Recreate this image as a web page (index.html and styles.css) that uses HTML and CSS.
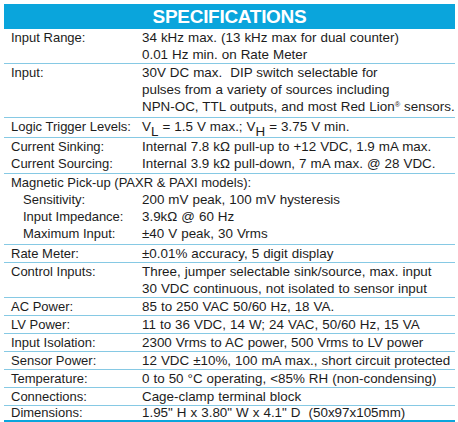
FILE: index.html
```html
<!DOCTYPE html>
<html lang="en">
<head>
    <meta charset="UTF-8">
    <meta name="viewport" content="width=device-width, initial-scale=1.0">
    <title>Specifications</title>
    <link rel="stylesheet" href="styles.css">
</head>
<body>

    <div class="spec-sheet">
        <h1 class="spec-title">SPECIFICATIONS</h1>

        <table class="spec-table">
            <tr>
                <th>Input Range:</th>
                <td>34 kHz max. (13 kHz max for dual counter)<br>0.01 Hz min. on Rate Meter</td>
            </tr>
            <tr class="pad-2">
                <th>Input:</th>
                <td>30V DC max.&nbsp; DIP switch selectable for<br>pulses from a variety of sources including<br>NPN-OC, TTL outputs, and most Red Lion<sup>®</sup> sensors.</td>
            </tr>
            <tr class="pad-2">
                <th>Logic Trigger Levels:</th>
                <td>V<sub>L</sub> = 1.5 V max.; V<sub>H</sub> = 3.75 V min.</td>
            </tr>
            <tr class="pad-1">
                <th>Current Sinking:<br>Current Sourcing:</th>
                <td>Internal 7.8 kΩ pull-up to +12 VDC, 1.9 mA max.<br>Internal 3.9 kΩ pull-down, 7 mA max. @ 28 VDC.</td>
            </tr>
            <tr class="pad-2">
                <td colspan="2" class="group">
                    <div class="group-head">Magnetic Pick-up (PAXR &amp; PAXI models):</div>
                    <div class="sub-row"><span class="sub-label">Sensitivity:</span><span>200 mV peak, 100 mV hysteresis</span></div>
                    <div class="sub-row"><span class="sub-label">Input Impedance:</span><span>3.9kΩ @ 60 Hz</span></div>
                    <div class="sub-row"><span class="sub-label">Maximum Input:</span><span>±40 V peak, 30 Vrms</span></div>
                </td>
            </tr>
            <tr>
                <th>Rate Meter:</th>
                <td>±0.01% accuracy, 5 digit display</td>
            </tr>
            <tr>
                <th>Control Inputs:</th>
                <td>Three, jumper selectable sink/source, max. input<br>30 VDC continuous, not isolated to sensor input</td>
            </tr>
            <tr>
                <th>AC Power:</th>
                <td>85 to 250 VAC 50/60 Hz, 18 VA.</td>
            </tr>
            <tr>
                <th>LV Power:</th>
                <td>11 to 36 VDC, 14 W; 24 VAC, 50/60 Hz, 15 VA</td>
            </tr>
            <tr>
                <th>Input Isolation:</th>
                <td>2300 Vrms to AC power, 500 Vrms to LV power</td>
            </tr>
            <tr>
                <th>Sensor Power:</th>
                <td>12 VDC ±10%, 100 mA max., short circuit protected</td>
            </tr>
            <tr>
                <th>Temperature:</th>
                <td>0 to 50 °C operating, &lt;85% RH (non-condensing)</td>
            </tr>
            <tr>
                <th>Connections:</th>
                <td>Cage-clamp terminal block</td>
            </tr>
            <tr class="last-row">
                <th>Dimensions:</th>
                <td>1.95" H x 3.80" W x 4.1" D&nbsp; (50x97x105mm)</td>
            </tr>
        </table>
    </div>

</body>
</html>
```

FILE: styles.css
```css
:root {
    --spec-blue: #0aa5dc;
    --rule-blue: #86c9e4;
    --text-color: #1c1c1c;
    --font-family: 'Liberation Sans', Arial, sans-serif;
}
body {
    margin: 0;
    padding: 4px 3px 0 4px;
    background: #ffffff;
    color: var(--text-color);
    font-family: var(--font-family);
    font-size: 13px;
}
.spec-sheet {
    width: 451px;
}
.spec-title {
    margin: 0;
    height: 25px;
    line-height: 26px;
    background-color: var(--spec-blue);
    color: #ffffff;
    text-align: center;
    font-size: 19px;
    font-weight: bold;
    letter-spacing: -0.3px;
}
.spec-table {
    width: 100%;
    table-layout: fixed;
    border-collapse: collapse;
    border-bottom: 3px solid var(--spec-blue);
}
.spec-table th,
.spec-table td {
    padding: 0;
    vertical-align: top;
    text-align: left;
    font-weight: normal;
    line-height: 17px;
    white-space: nowrap;
}
.spec-table td {
    font-size: 13.4px;
    word-spacing: 0.3px;
}
.spec-table tr {
    border-bottom: 1px solid var(--rule-blue);
}
.spec-table tr.last-row {
    border-bottom: none;
}
.last-row th,
.last-row td {
    line-height: 14px;
}
.pad-1 th,
.pad-1 td {
    padding-bottom: 1px;
}
.pad-2 th,
.pad-2 td {
    padding-bottom: 2px;
}
.spec-table th {
    width: 131px;
    padding-left: 7px;
}
.spec-table sup {
    font-size: 0.55em;
    vertical-align: 0.6em;
    line-height: 0;
}
.spec-table sub {
    font-size: 1em;
    vertical-align: -0.35em;
    line-height: 0;
}
.spec-table .group {
    padding-left: 7px;
    font-size: 13px;
    word-spacing: 0;
}
.sub-row {
    display: flex;
}
.sub-label {
    width: 119px;
    padding-left: 12px;
    flex-shrink: 0;
}
.sub-row span + span {
    font-size: 13.4px;
    word-spacing: 0.3px;
}
```
